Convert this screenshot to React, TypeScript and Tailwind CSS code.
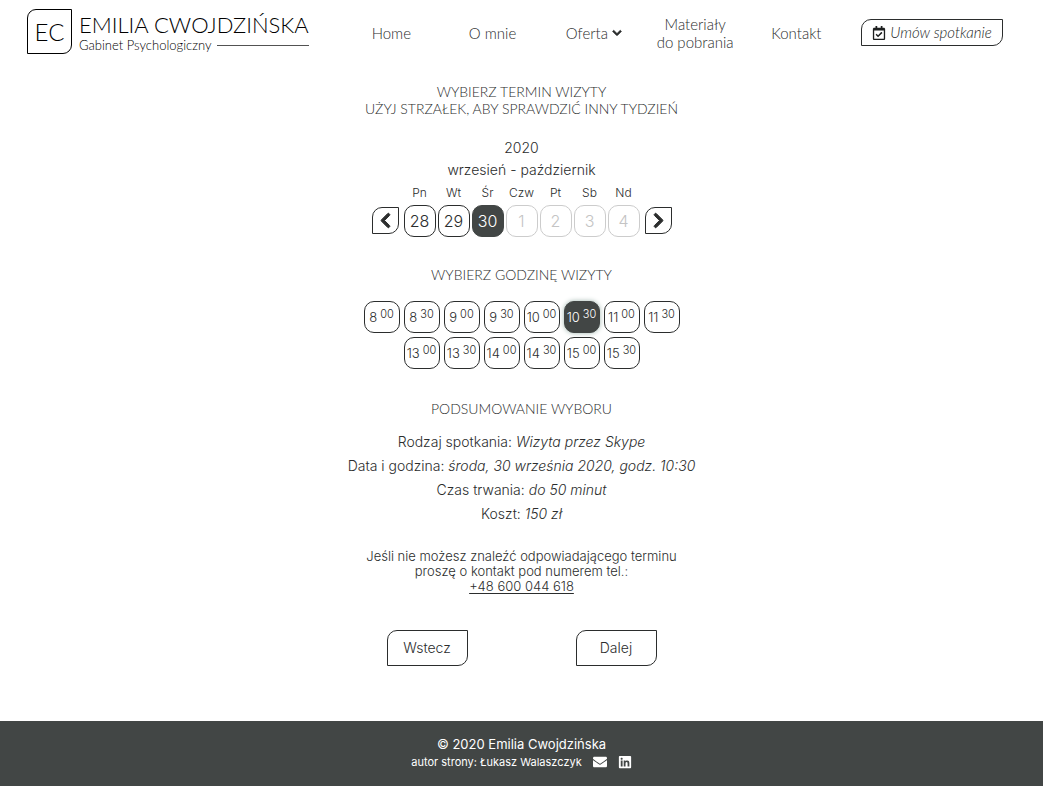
import { useState } from 'react';
import {
  FaChevronDown,
  FaChevronLeft,
  FaChevronRight,
  FaEnvelope,
  FaLinkedin,
  FaRegCalendarCheck,
} from 'react-icons/fa';

const days = [
  { name: 'Pn', day: 28, open: true },
  { name: 'Wt', day: 29, open: true },
  { name: 'Śr', day: 30, open: true },
  { name: 'Czw', day: 1, open: false },
  { name: 'Pt', day: 2, open: false },
  { name: 'Sb', day: 3, open: false },
  { name: 'Nd', day: 4, open: false },
];

const hours = [
  ['8:00', '8:30', '9:00', '9:30', '10:00', '10:30', '11:00', '11:30'],
  ['13:00', '13:30', '14:00', '14:30', '15:00', '15:30'],
];

const corner = 'rounded-tl-[10px] rounded-br-[10px] border border-[#2b2d2d]';

function Logo() {
  return (
    <a href="#home" aria-label="Emilia Cwojdzińska" className="flex shrink-0 items-center gap-[7px] pb-0.5 font-light text-black">
      <span className="flex size-[45px] items-center justify-center rounded-tl-[9px] rounded-br-[9px] border border-black text-2xl">
        EC
      </span>
      <span className="flex flex-col">
        <span className="text-[22px] leading-[27px] whitespace-nowrap">EMILIA CWOJDZIŃSKA</span>
        <span className="flex items-center gap-1.5 text-[13px] leading-[15px]">
          Gabinet Psychologiczny
          <span className="h-px flex-1 bg-neutral-600" />
        </span>
      </span>
    </a>
  );
}

function Header() {
  const link = 'text-center text-[15px] leading-[18px] font-light text-[#2b2d2d]';
  return (
    <header className="flex h-[65px] items-center pr-10 pl-[27px]">
      <Logo />
      <nav className="ml-8 grid flex-1 grid-cols-5 items-center">
        <a href="#home" className={link}>Home</a>
        <a href="#about" className={link}>O mnie</a>
        <a href="#offer" className={`${link} flex items-center justify-center gap-1`}>
          Oferta <FaChevronDown className="size-2.5" stroke="currentColor" strokeWidth="40" />
        </a>
        <a href="#materials" className={link}>Materiały<br />do pobrania</a>
        <a href="#contact" className={link}>Kontakt</a>
      </nav>
      <a
        href="#booking"
        className={`${corner} ml-3.5 flex h-[27px] w-[142px] shrink-0 items-center justify-center gap-1 text-[15px] font-light whitespace-nowrap text-[#1d1f1f] italic`}
      >
        <FaRegCalendarCheck className="size-3.5" />
        Umów spotkanie
      </a>
    </header>
  );
}

export default function App() {
  const [day, setDay] = useState(30);
  const [hour, setHour] = useState('10:30');
  const heading = 'text-center text-sm leading-[17px] font-light uppercase';

  return (
    <div className="flex min-h-screen flex-col bg-white font-['Lato','Noto_Sans',sans-serif] text-[#2b2d2d]">
      <Header />

      <main className="flex flex-1 flex-col items-center pt-[18px] pb-[55px]">
        <h1 className={heading}>
          Wybierz termin wizyty
          <br />
          Użyj strzałek, aby sprawdzić inny tydzień
        </h1>

        <div className="mt-5 text-center font-['Inter',sans-serif] text-sm leading-[22px] font-light">
          <p>2020</p>
          <p>wrzesień - październik</p>
        </div>

        <div className="flex items-end gap-[5px] font-['Inter',sans-serif]">
          <button type="button" aria-label="Poprzedni tydzień" className={`${corner} mb-[3px] flex size-[27px] items-center justify-center`}>
            <FaChevronLeft className="size-[17px]" stroke="currentColor" strokeWidth="30" />
          </button>
          <div className="flex gap-0.5">
            {days.map(({ name, day: value, open }) => (
              <div key={value} className="flex w-8 flex-col items-center">
                <span className="pb-px text-xs leading-[23px] font-light">{name}</span>
                <button
                  type="button"
                  disabled={!open}
                  aria-pressed={day === value}
                  onClick={() => setDay(value)}
                  className={`size-8 rounded-[10px] border text-base font-light ${
                    !open
                      ? 'border-[#cccccc] text-[#c4c4c4]'
                      : day === value
                        ? 'border-[#424645] bg-[#424645] text-white'
                        : 'border-[#2b2d2d]'
                  }`}
                >
                  {value}
                </button>
              </div>
            ))}
          </div>
          <button type="button" aria-label="Następny tydzień" className={`${corner} mb-[3px] flex size-[27px] items-center justify-center`}>
            <FaChevronRight className="size-[17px]" stroke="currentColor" strokeWidth="30" />
          </button>
        </div>

        <h2 className={`${heading} mt-[29px]`}>Wybierz godzinę wizyty</h2>

        <div className="mt-[18px] flex flex-col items-center gap-1 font-['Inter',sans-serif]">
          {hours.map((row) => (
            <div key={row[0]} className="flex gap-1">
              {row.map((time) => {
                const [h, m] = time.split(':');
                return (
                  <button
                    key={time}
                    type="button"
                    aria-pressed={hour === time}
                    onClick={() => setHour(time)}
                    className={`flex h-8 w-9 items-center justify-center gap-[3px] rounded-[10px] border text-[13px] font-light ${
                      hour === time
                        ? 'border-[#424645] bg-[#424645] text-white shadow-[0_0_5px_#9fb5ae]'
                        : 'border-[#2b2d2d]'
                    }`}
                  >
                    <span className="pt-0.5">{h}</span>
                    <span className="pb-1.5 text-[11px]">{m}</span>
                  </button>
                );
              })}
            </div>
          ))}
        </div>

        <h2 className={`${heading} mt-[31px]`}>Podsumowanie wyboru</h2>

        <div className="mt-[13px] text-center font-['Inter',sans-serif] text-sm leading-6 font-light">
          <p>Rodzaj spotkania: <em>Wizyta przez Skype</em></p>
          <p>Data i godzina: <em>środa, 30 września 2020, godz. 10:30</em></p>
          <p>Czas trwania: <em>do 50 minut</em></p>
          <p>Koszt: <em>150 zł</em></p>
        </div>

        <p className="mt-[23px] text-center font-['Inter',sans-serif] text-[13px] leading-[15px] font-light">
          Jeśli nie możesz znaleźć odpowiadającego terminu
          <br />
          proszę o kontakt pod numerem tel.:
          <br />
          <a href="tel:+48600044618" className="underline underline-offset-2">+48 600 044 618</a>
        </p>

        <div className="mt-9 flex gap-[108px] font-['Inter',sans-serif] text-sm font-light">
          <button type="button" className={`${corner} h-9 w-[81px]`}>Wstecz</button>
          <button type="button" className={`${corner} h-9 w-[81px]`}>Dalej</button>
        </div>
      </main>

      <footer className="flex h-[65px] flex-col items-center justify-center bg-[#424645] pb-0.5 font-['Inter',sans-serif] text-white">
        <p className="text-[13px] leading-[18px]">© 2020 Emilia Cwojdzińska</p>
        <p className="flex items-center text-[11px] leading-[18px]">
          autor strony: Łukasz Walaszczyk
          <a href="#mail" aria-label="E-mail" className="ml-[11px]"><FaEnvelope className="size-3.5" /></a>
          <a href="#linkedin" aria-label="LinkedIn" className="ml-[11px]"><FaLinkedin className="size-3.5" /></a>
        </p>
      </footer>
    </div>
  );
}
